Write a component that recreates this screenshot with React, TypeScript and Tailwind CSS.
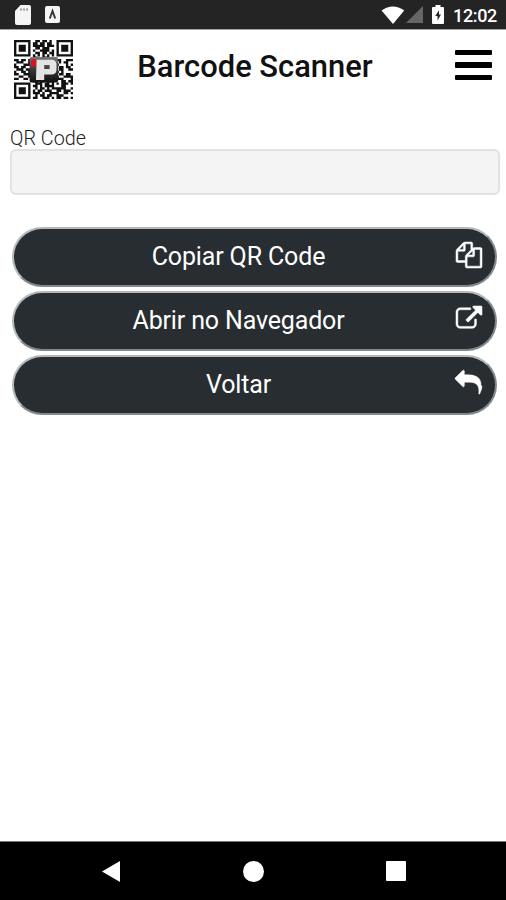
import type { ReactNode } from "react";

interface Action {
    label: string;
    icon: string;
}

const actions: Action[] = [
    {
        label: "Copiar QR Code",
        icon: "M1696 384q40 0 68 28t28 68v1216q0 40-28 68t-68 28h-960q-40 0-68-28t-28-68v-288h-544q-40 0-68-28t-28-68v-672q0-40 20-88t48-76l408-408q28-28 76-48t88-20h416q40 0 68 28t28 68v328q68-40 128-40h416zm-544 213l-299 299h299v-299zm-640-384l-299 299h299v-299zm196 647l316-316v-416h-384v416q0 40-28 68t-68 28h-416v640h512v-256q0-40 20-88t48-76zm956 804v-1152h-384v416q0 40-28 68t-68 28h-416v640h896z"
    },
    {
        label: "Abrir no Navegador",
        icon: "M1408 928v320q0 119-84.5 203.5t-203.5 84.5h-832q-119 0-203.5-84.5t-84.5-203.5v-832q0-119 84.5-203.5t203.5-84.5h704q14 0 23 9t9 23v64q0 14-9 23t-23 9h-704q-66 0-113 47t-47 113v832q0 66 47 113t113 47h832q66 0 113-47t47-113v-320q0-14 9-23t23-9h64q14 0 23 9t9 23zm384-864v512q0 26-19 45t-45 19-45-19l-176-176-652 652q-10 10-23 10t-23-10l-114-114q-10-10-10-23t10-23l652-652-176-176q-19-19-19-45t19-45 45-19h512q26 0 45 19t19 45z"
    },
    {
        label: "Voltar",
        icon: "M1792 1120q0 166-127 451-3 7-10.5 24t-13.5 30-13 22q-12 17-28 17-15 0-23.5-10t-8.5-25q0-9 2.5-26.5t2.5-23.5q5-68 5-123 0-112-19.5-200.5t-54-153.5-89-112-117.5-78.5-145.5-43.5-166.5-20-188.5-6h-224v256q0 26-19 45t-45 19-45-19l-512-512q-19-19-19-45t19-45l512-512q19-19 45-19t45 19 19 45v256h224q713 0 875 403 53 134 53 333z"
    }
];

const qrRows = [
    "#######..##.##.#..#######",
    "#.....#.##.##.##..#.....#",
    "#.###.#.#####.###.#.###.#",
    "#.###.#..##.###...#.###.#",
    "#.###.#.#..####.#.#.###.#",
    "#.....#..##.##.##.#.....#",
    "#######.#.#.#.#.#.#######",
    "........##..###..........",
    "##.##.#..........###..###",
    ".###..#............#.##..",
    "#...###...........#...#.#",
    "##.##..............##.##.",
    ".###.##............##..##",
    "#..##.#...........#.#....",
    "##..###............##.##.",
    "..##..#...........#..####",
    "##..##..........#####...#",
    "........##.##.###...##.##",
    "#######..###.##.#.#.###.#",
    "#.....#.##.#.####...##...",
    "#.###.#..#.##.#.######..#",
    "#.###.#.#.##.###..##.###.",
    "#.###.#.###.#..####..##.#",
    "#.....#..#.##.##..###....",
    "#######.##..###.#.##.##.#"
];

const qrPath = qrRows
    .map((row, y) => [...row].map((cell, x) => (cell === "#" ? `M${x} ${y}h1v1h-1z` : "")).join(""))
    .join("");

function Logo() {
    return (
        <svg viewBox="0 0 25 25" className="size-[59px]">
            <defs>
                <linearGradient id="badge" x1="0" y1="0" x2="0" y2="1">
                    <stop offset="0" stopColor="#777" />
                    <stop offset="0.55" stopColor="#333" />
                    <stop offset="1" stopColor="#111" />
                </linearGradient>
            </defs>
            <path d={qrPath} fill="#111" />
            <rect x="6.6" y="7.2" width="12.1" height="10.8" rx="0.8" fill="url(#badge)" />
            <rect x="7.3" y="8.2" width="2" height="2.9" fill="#e3101a" />
            <path
                fill="#e4e4e4"
                fillRule="evenodd"
                d="M9.600 8.400h6.200q2.200 0 2.200 2v2.200q0 2-2.200 2h-3v2.300H9.300zM12.800 10.600v1.700h2.300v-1.700z"
            />
        </svg>
    );
}

function StatusBar() {
    return (
        <div className="flex h-[30px] items-center justify-between border-b border-[#a3a3a3] bg-[#242424] pr-[9px] pl-[14px] text-white">
            <div className="flex items-center gap-[14px]">
                <svg viewBox="0 0 17 20" className="h-5 w-[17px]">
                    <path d="M6.5 0H15q2 0 2 2v16q0 2-2 2H3q-2 0-2-2V6z" fill="#f5f5f5" />
                    <path d="M7 3.4v2M10 3.4v2M13 3.4v2" stroke="#777" strokeWidth="1.4" />
                </svg>
                <svg viewBox="0 0 15 17" className="h-[17px] w-[15px]">
                    <rect width="15" height="17" rx="2" fill="#f5f5f5" />
                    <path d="M4.8 12.500 7.500 5l2.700 7.500" stroke="#333" strokeWidth="1.9" fill="none" />
                </svg>
            </div>
            <div className="flex items-center">
                <svg viewBox="0 0 24 18" className="h-[18px] w-6">
                    <path d="M0.6 4.6Q12-3.8 23.2 4.6L12 18z" fill="#fff" />
                </svg>
                <svg viewBox="0 0 17 17" className="ml-px h-[17px] w-[17px]">
                    <path d="M17 0v17H0z" fill="#666" />
                </svg>
                <svg viewBox="0 0 12 19" className="ml-[9px] h-[19px] w-3">
                    <path d="M3.5 0h5v2H11q1 0 1 1v15q0 1-1 1H1q-1 0-1-1V3q0-1 1-1h2.500z" fill="#fff" />
                    <path d="M7 5.200 3.200 11H5.500v4.600L9 9.600H7z" fill="#242424" />
                </svg>
                <span className="mt-[3px] ml-[9px] text-[18px] leading-none font-medium tracking-[-0.350px]">12:02</span>
            </div>
        </div>
    );
}

function Header() {
    return (
        <header className="flex h-[78px] items-center justify-between pr-[14px] pl-[14px]">
            <Logo />
            <h1 className="-mt-[3px] mr-[18px] text-[30.9px] leading-none font-medium text-[#111]">Barcode Scanner</h1>
            <button className="-mt-[8px] flex flex-col gap-[7px]" aria-label="Menu">
                <span className="h-[5.500px] w-[37px] rounded-[1px] bg-black" />
                <span className="h-[5.500px] w-[37px] rounded-[1px] bg-black" />
                <span className="h-[5.500px] w-[37px] rounded-[1px] bg-black" />
            </button>
        </header>
    );
}

function ActionButton({ label, icon }: Action) {
    return (
        <button className="flex h-[60px] items-center rounded-full border-2 border-t-[#b4b9bb] border-r-[#85888a] border-b-[#85888a] border-l-[#b4b9bb] bg-[#272d30] pr-[13px] pl-[7px] text-white">
            <span className="-mt-px flex-1 text-center text-[25px] leading-none tracking-[-0.150px]">{label}</span>
            <svg viewBox="0 0 1792 1792" className="-mt-[5px] size-[26px] overflow-visible fill-white stroke-white">
                <path d={icon} strokeWidth="35" />
            </svg>
        </button>
    );
}

function NavBar({ children }: { children: ReactNode }) {
    return (
        <nav className="flex h-[59px] items-center justify-between border-t border-[#777] bg-black pr-[100px] pl-[102px]">
            {children}
        </nav>
    );
}

export default function App() {
    return (
        <div className="flex h-[900px] w-[506px] flex-col overflow-hidden bg-white font-['Roboto',sans-serif]">
            <StatusBar />
            <Header />
            <main className="flex flex-1 flex-col">
                <div className="flex flex-col pt-5 pr-[6px] pl-[10px]">
                    <label htmlFor="code" className="text-[19.800px] leading-[21px] font-light text-[#222]">
                        QR Code
                    </label>
                    <input
                        id="code"
                        readOnly
                        className="h-[46px] rounded-[6px] border-2 border-[#e2e2e2] bg-[#f4f4f4] outline-none"
                    />
                </div>
                <div className="mt-8 flex flex-col gap-1 pr-[9px] pl-3">
                    {actions.map((action) => (
                        <ActionButton key={action.label} {...action} />
                    ))}
                </div>
            </main>
            <NavBar>
                <svg viewBox="0 0 18 21" className="h-[21px] w-[18px]">
                    <path d="M18 0v21L0 10.500z" fill="#fff" />
                </svg>
                <span className="size-[21px] rounded-full bg-white" />
                <span className="size-5 rounded-[1px] bg-white" />
            </NavBar>
        </div>
    );
}
